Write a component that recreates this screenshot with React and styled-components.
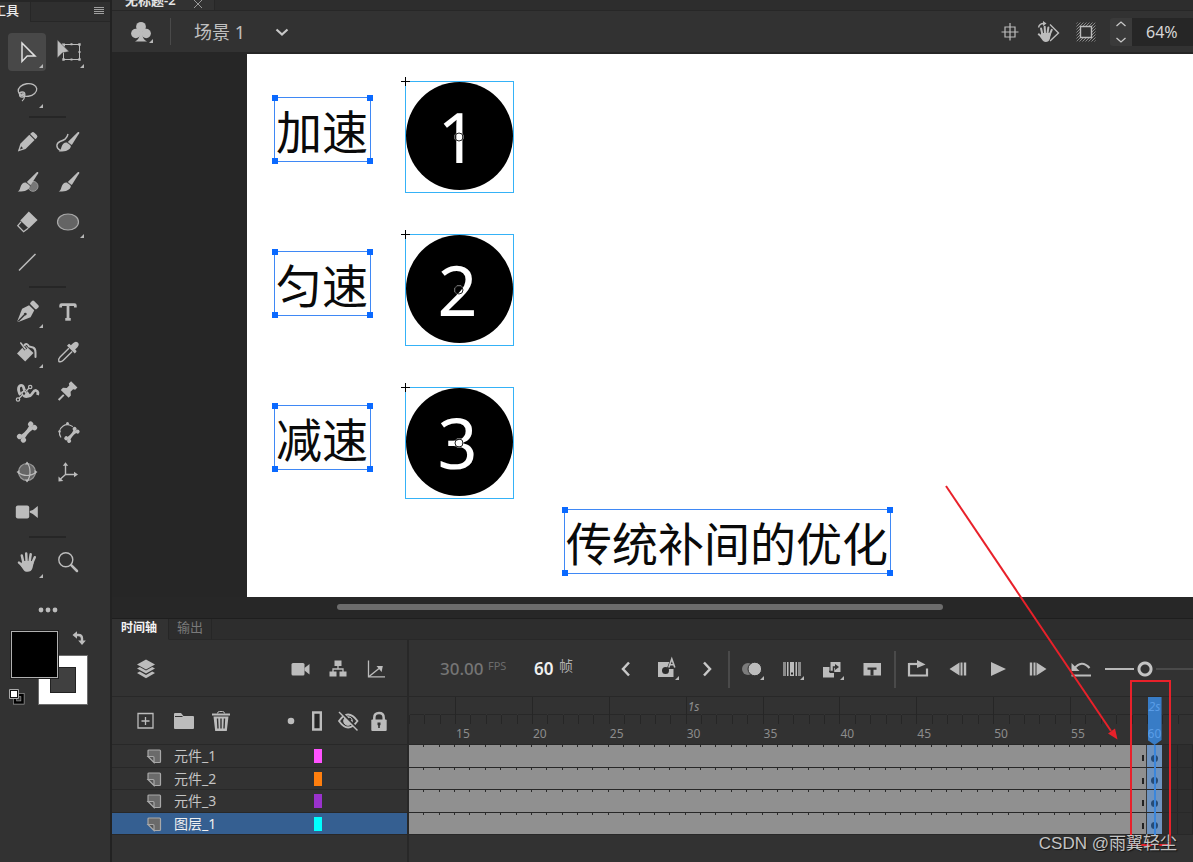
import React, { useState } from "react";
import styled, { createGlobalStyle, css } from "styled-components";
import { Type } from "lucide-react";

const GlobalStyle = createGlobalStyle`
  * {
    box-sizing: border-box;
  }
  body {
    margin: 0;
    background: #262626;
    color: #c4c4c4;
    font-family: "Noto Sans", "Noto Sans CJK SC", sans-serif;
    font-size: 12px;
  }
  button, input {
    font: inherit;
    color: inherit;
    border: 0;
    padding: 0;
    margin: 0;
    background: none;
  }
  button {
    display: flex;
    align-items: center;
    justify-content: center;
  }
`;

const FRAME_COUNT = 51;
const FIRST_FRAME = 12;
const LAST_FRAME = 60;

/* ---------- shell ---------- */

const Shell = styled.div`
  position: relative;
  display: flex;
  height: 100vh;
  overflow: hidden;
`;

const ToolPanel = styled.aside`
  flex: none;
  width: 112px;
  background: #323232;
  border-right: 2px solid #222;
`;

const MainColumn = styled.main`
  flex: 1;
  min-width: 0;
  display: flex;
  flex-direction: column;
`;

const ToolTabs = styled.div`
  display: flex;
  height: 22px;
  background: #2f2f2f;
  border-top: 2px solid #262626;
  margin-bottom: 11px;
`;

const ToolTab = styled.div`
  display: flex;
  justify-content: flex-end;
  width: 30px;
  padding-right: 11px;
  overflow: hidden;
  white-space: nowrap;
  font-size: 13px;
  line-height: 16px;
  font-weight: 500;
  color: #ececec;
  background: #323232;
`;

const ToolTabsRest = styled.div`
  flex: 1;
  display: flex;
  align-items: center;
  justify-content: flex-end;
  padding-right: 6px;
  padding-bottom: 2px;
  border-left: 1px solid #272727;
  border-bottom: 1px solid #272727;
`;

/* ---------- tools ---------- */

const ToolGroup = styled.div`
  display: grid;
  grid-template-columns: 38px 38px;
  grid-auto-rows: 38px;
  gap: 2px 3px;
  padding: 0 8px 2px;
`;

const ToolButton = styled.button`
  position: relative;
  border-radius: 4px;
  background: ${(p) => (p.$active ? "#484848" : "none")};
  ${(p) =>
    p.$more &&
    css`
      &::after {
        content: "";
        position: absolute;
        right: 3px;
        bottom: 3px;
        border: 2px solid #b8b8b8;
        border-top-color: transparent;
        border-left-color: transparent;
      }
    `}
`;

const ToolSeparator = styled.hr`
  width: 37px;
  height: 2px;
  margin: 3px 0 5px 29px;
  border: 0;
  background: #262626;
`;

const MoreTools = styled.button`
  width: 80px;
  height: 38px;
  margin: 8px 0 1px 8px;
`;

const Swatches = styled.div`
  position: relative;
  height: 78px;
  margin-left: 10px;
`;

const FillSwatch = styled.button`
  position: absolute;
  left: 0;
  top: 0;
  width: 49px;
  height: 49px;
  border: 1px solid #1c1c1c;
  background: #000;
  box-shadow: inset 0 0 0 1px #b0b0b0;
`;

const StrokeSwatch = styled.button`
  position: absolute;
  left: 28px;
  top: 25px;
  width: 50px;
  height: 50px;
  border: 1px solid #6c6c6c;
  background: #fff;
  span {
    width: 26px;
    height: 26px;
    background: #404040;
    border: 1px solid #222;
  }
`;

const SwapButton = styled.button`
  position: absolute;
  left: 61px;
  top: 0;
`;

const ResetButton = styled.button`
  position: absolute;
  left: -2px;
  top: 58px;
`;

/* ---------- document header ---------- */

const DocTabs = styled.div`
  flex: none;
  display: flex;
  height: 11px;
  overflow: hidden;
  background: #2d2d2d;
  border-bottom: 1px solid #272727;
`;

const DocTab = styled.div`
  display: flex;
  align-items: flex-end;
  gap: 18px;
  width: 103px;
  padding: 0 0 2px 13px;
  white-space: nowrap;
  font-size: 13px;
  line-height: 16px;
  font-weight: 600;
  color: #e4e4e4;
  background: #323232;
  border-right: 1px solid #272727;
`;

const DocBar = styled.div`
  flex: none;
  display: flex;
  align-items: center;
  height: 43px;
  padding-left: 2px;
  background: #323232;
  border-bottom: 2px solid #262626;
`;

const BarButton = styled.button`
  flex: none;
  width: ${(p) => p.$w || 38}px;
  height: 38px;
  position: relative;
  ${(p) =>
    p.$more &&
    css`
      &::after {
        content: "";
        position: absolute;
        right: ${(p.$w - 24) / 2}px;
        bottom: 8px;
        border: 2px solid #b8b8b8;
        border-top-color: transparent;
        border-left-color: transparent;
      }
    `}
`;

const BarDivider = styled.span`
  flex: none;
  width: ${(p) => p.$w || 1}px;
  height: ${(p) => p.$h}px;
  margin: 0 2px;
  background: #4a4a4a;
`;

const SceneName = styled.span`
  margin: 0 20px 0 21px;
  font-size: 18px;
  line-height: 24px;
  color: #c0c0c0;
`;

const Grow = styled.span`
  flex: 1;
`;

const Spinner = styled.div`
  display: flex;
  flex-direction: column;
  width: 22px;
  height: 28px;
  margin-left: 5px;
  border-radius: 3px 0 0 3px;
  background: #3a3a3a;
  button {
    flex: 1;
  }
`;

const ZoomInput = styled.input`
  width: 61px;
  height: 28px;
  padding-left: 14px;
  font-size: 16px;
  color: #d6d6d6;
  background: #262626;
`;

/* ---------- stage ---------- */

const Workspace = styled.section`
  flex: 1;
  min-height: 0;
  display: flex;
  padding-left: 135px;
  background: #262626;
`;

const Stage = styled.div`
  position: relative;
  flex: 1;
  overflow: hidden;
  background: #fff;
`;

const TextFrame = styled.div`
  position: absolute;
  left: ${(p) => p.$x}px;
  top: ${(p) => p.$y}px;
  padding: 0 2px 0 1px;
  border: 1px solid #3f88f5;
  font-family: "Noto Sans CJK SC", sans-serif;
  font-size: 46px;
  line-height: 63px;
  white-space: nowrap;
  color: #0a0a0a;
`;

const Handle = styled.i`
  position: absolute;
  width: 6px;
  height: 6px;
  background: #0a69ff;
  ${(p) => p.$v}: -3px;
  ${(p) => p.$h}: -3px;
`;

const SymbolFrame = styled.div`
  position: absolute;
  left: ${(p) => p.$x}px;
  top: ${(p) => p.$y}px;
  width: 109px;
  height: 112px;
  border: 1px solid #35b2f7;
`;

const SymbolDisc = styled.div`
  display: flex;
  align-items: center;
  justify-content: center;
  height: 108px;
  padding-right: 4px;
  border-radius: 50%;
  background: #000;
  color: #fff;
  font-family: "Noto Sans", sans-serif;
  font-size: 70px;
  line-height: 108px;
`;

const RegistrationCross = styled.svg`
  position: absolute;
  left: -5px;
  top: -5px;
`;

const PivotPoint = styled.svg`
  position: absolute;
  left: 47px;
  top: 49px;
`;

const ScrollStrip = styled.div`
  flex: none;
  height: 21px;
  padding: 7px 0 0 20.8%;
  background: #272727;
`;

const ScrollThumb = styled.div`
  width: 70.8%;
  height: 6px;
  border-radius: 3px;
  background: #6c6c6c;
`;

/* ---------- timeline ---------- */

const Timeline = styled.section`
  flex: none;
  background: #323232;
  border-top: 1px solid #1e1e1e;
`;

const PanelTabs = styled.div`
  display: flex;
  height: 21px;
  background: #2d2d2d;
`;

const PanelTab = styled.button`
  padding: ${(p) => (p.$active ? "0 11px 3px 9px" : "0 8px 4px 8px")};
  font-size: ${(p) => (p.$active ? 12 : 13)}px;
  line-height: 16px;
  font-weight: ${(p) => (p.$active ? 700 : 400)};
  color: ${(p) => (p.$active ? "#f2f2f2" : "#7a7a7a")};
  background: ${(p) => (p.$active ? "#323232" : "none")};
  border-right: 1px solid #262626;
  border-bottom: 1px solid ${(p) => (p.$active ? "#323232" : "#282828")};
`;

const PanelTabsRest = styled.div`
  flex: 1;
  border-bottom: 1px solid #282828;
`;

const TimelineBody = styled.div`
  display: flex;
`;

const LayersPane = styled.div`
  flex: none;
  width: 297px;
  border-right: 2px solid #282828;
`;

const FramesPane = styled.div`
  flex: 1;
  min-width: 0;
  overflow: hidden;
`;

const Toolbar = styled.div`
  display: flex;
  align-items: center;
  height: 57px;
  padding: ${(p) => p.$pad};
  border-bottom: 1px solid #282828;
`;

const LayerHeader = styled.div`
  display: flex;
  align-items: center;
  height: 48px;
  padding: 0 13px 0 14px;
  border-bottom: 1px solid #282828;
`;

const LayerList = styled.ul`
  display: grid;
  grid-template-rows: repeat(4, minmax(0, 1fr));
  height: 90px;
  margin: 0 0 27px;
  padding: 0;
  list-style: none;
`;

const LayerRow = styled.li`
  display: flex;
  align-items: center;
  padding: 1px 85px 0 34px;
  font-size: 14px;
  line-height: 20px;
  color: ${(p) => (p.$active ? "#f0f0f0" : "#c4c4c4")};
  background: ${(p) => (p.$active ? "#355f91" : "none")};
  border-bottom: 1px solid #282828;
`;

const LayerName = styled.span`
  flex: 1;
  padding-left: 12px;
`;

const LayerColor = styled.span`
  width: 8px;
  height: 14px;
  background: ${(p) => p.$color};
`;

const NumberField = styled.label`
  flex: none;
  display: flex;
  width: ${(p) => p.$w}px;
  line-height: 24px;
  color: ${(p) => (p.$bright ? "#f0f0f0" : "#757575")};
  input {
    width: ${(p) => (p.$bright ? 25 : 48)}px;
    height: 24px;
    font-size: 17px;
    font-weight: ${(p) => (p.$bright ? 600 : 500)};
  }
  span {
    font-size: ${(p) => (p.$bright ? 14 : 11)}px;
    line-height: 18px;
    color: ${(p) => (p.$bright ? "#b0b0b0" : "#6c6c6c")};
  }
`;

const ZoomSlider = styled.input`
  flex: none;
  appearance: none;
  width: 100px;
  height: 22px;
  margin-left: 1px;
  background: linear-gradient(90deg, #b8b8b8 40px, #4a4a4a 40px) center / 100%
    2px no-repeat;
  &::-webkit-slider-thumb {
    appearance: none;
    width: 22px;
    height: 22px;
    background: radial-gradient(
      circle,
      #323232 4px,
      #c4c4c4 5px,
      #c4c4c4 7px,
      #323232 8px
    );
  }
`;

const FrameArea = styled.div`
  position: relative;
`;

const Ruler = styled.div`
  display: grid;
  grid-template-columns: repeat(${FRAME_COUNT}, minmax(0, 1fr));
  height: 48px;
  border-bottom: 1px solid #282828;
`;

const RulerCell = styled.div`
  height: 27px;
  white-space: nowrap;
  border-left: 1px solid ${(p) => (p.$major ? "#262626" : "transparent")};
  background: linear-gradient(#282828, #282828) 0 17px / 100% 1px no-repeat,
    linear-gradient(#262626, #262626) -1px 18px / 1px 9px no-repeat;
  background-origin: padding-box;
  background-clip: border-box;
  color: #8c8c8c;
`;

const SecondLabel = styled.div`
  height: 27px;
  padding-left: 1px;
  font-size: 12px;
  line-height: 19px;
  font-style: italic;
`;

const FrameLabel = styled.div`
  font-size: 12px;
  line-height: 20px;
`;

const FrameRows = styled.div`
  display: grid;
  grid-template-rows: repeat(4, minmax(0, 1fr));
  height: 90px;
  margin-bottom: 27px;
`;

const FrameRow = styled.div`
  display: grid;
  grid-template-columns: repeat(${FRAME_COUNT}, minmax(0, 1fr));
  border-bottom: 1px solid #282828;
`;

const FrameCell = styled.div`
  display: flex;
  align-items: center;
  justify-content: ${(p) => (p.$kind === "key" ? "center" : "flex-end")};
  padding-top: 5px;
  background: linear-gradient(#2a2a2a, #2a2a2a) right top / 1px 2px no-repeat
    #909090;
  ${(p) =>
    p.$kind === "end" &&
    css`
      padding-right: 2px;
      background: #909090;
      border-right: 1px solid #3a3a3a;
    `}
  ${(p) =>
    p.$kind === "key" &&
    css`
      background: #6e93bf;
    `}
  ${(p) =>
    p.$kind === "empty" &&
    css`
      background: #2e2e2e;
      border-right: 1px solid #262626;
    `}
`;

const EndMark = styled.span`
  width: 2px;
  height: 6px;
  background: #222;
`;

const KeyDot = styled.span`
  width: 7px;
  height: 7px;
  border-radius: 50%;
  background: #274b75;
`;

const PlayheadLayer = styled.div`
  position: absolute;
  inset: 0;
  display: grid;
  grid-template-columns: repeat(${FRAME_COUNT}, minmax(0, 1fr));
  pointer-events: none;
`;

const Playhead = styled.div`
  grid-column: ${LAST_FRAME - FIRST_FRAME + 1};
  display: flex;
  flex-direction: column;
  align-items: center;
`;

const PlayheadFlag = styled.div`
  width: 14px;
  height: 48px;
  overflow: hidden;
  font-size: 12px;
  color: #5a9ce6;
  background: #387cc6;
  clip-path: polygon(0 0, 100% 0, 100% 43px, 50% 100%, 0 43px);
`;

const PlayheadLine = styled.div`
  flex: 1;
  width: 2px;
  background: #3a86dc;
`;

/* ---------- annotations ---------- */

const Annotation = styled.svg`
  position: absolute;
  right: 0;
  bottom: 0;
  pointer-events: none;
`;

const Watermark = styled.div`
  position: absolute;
  right: 16px;
  bottom: 6px;
  font-family: "Liberation Sans", "Noto Sans CJK SC", sans-serif;
  font-size: 17px;
  line-height: 24px;
  color: #c4c4c4;
  text-shadow: 1px 1px 1px #111;
`;

/* ---------- icons ---------- */

const C = "#bcbcbc";
const BG = "#323232";

const Icon = ({ size = 24, fill = C, stroke = "none", children }) => (
  <svg
    width={size}
    height={size}
    viewBox={`0 0 ${size} ${size}`}
    fill={fill}
    stroke={stroke}
    overflow="visible"
    aria-hidden="true"
  >
    {children}
  </svg>
);

const Brush = () => (
  <>
    <path d="M21.700 2.200c.8-.7 2 0 1.500 1L15.800 15l-4-3z" />
    <path d="M11 12.600c2.200.3 3.700 1.700 3.900 3.600-.8 4-5.200 5.500-12.200 5.300 1.900-1 2.100-2.500 2.800-4.500.8-2.500 2.700-4.800 5.500-4.400z" />
    <path d="m10.800 12.200 5 3.800" stroke={BG} strokeWidth=".7" />
  </>
);

const BoneShape = () => (
  <>
    <path d="M9 4h6l-1 6v4l1 6H9l1-6v-4z" />
    <circle cx="9.200" cy="3" r="2.900" />
    <circle cx="14.800" cy="3" r="2.900" />
    <circle cx="9.200" cy="21" r="2.900" />
    <circle cx="14.800" cy="21" r="2.900" />
  </>
);

const HandShape = () => (
  <>
    <g stroke={C} strokeWidth="2.500" strokeLinecap="round" fill="none">
      <path d="M8.500 13 6.800 5.500M11.600 12 11.200 3.500M14.500 12 15.700 4.200M17 13.500 19.800 7.200M8.500 16.500 4 12.600" />
    </g>
    <path d="M7.300 11h9.500l2 1.500-1.300 5.500c-.8 2.800-2.500 3.800-5 3.800-2.300 0-3.500-.8-4.600-2.800L5.500 15.500z" />
  </>
);

const SelectIcon = () => (
  <Icon fill="none" stroke="#e0e0e0">
    <path d="M7 3v18.500l5.200-5.400h7.800z" strokeWidth="1.500" />
  </Icon>
);

const TransformIcon = () => (
  <Icon>
    <g transform="translate(0 -1)">
      <path d="M7.500 5.500h16v15h-16z" fill="none" stroke={C} />
      <path d="M6 4.500h3v3H6zM14.500 4.300h2v2h-2zM22.300 4.300h2.400v2.400h-2.400zM22.500 12h2v2h-2zM22.300 19.300h2.400v2.400h-2.400zM14.500 19.500h2v2h-2zM6.300 19.300h2.400v2.400H6.300z" />
      <path d="M1.300.8v18.200l5.200-5.200 6.600-1.200z" stroke={BG} strokeWidth=".5" />
    </g>
  </Icon>
);

const LassoIcon = () => (
  <Icon fill="none" stroke={C}>
    <ellipse cx="12.500" cy="10" rx="9.300" ry="6.300" strokeWidth="1.300" transform="rotate(-8 12.500 10)" />
    <circle cx="7.200" cy="14.500" r="2.700" strokeWidth="1.200" />
    <path d="M4 13.200c2-1.500 5.500 0 5.500 3.300 0 2-1 3.500-2.500 4.500M5 15.500l4-1.500" strokeWidth="1.200" />
  </Icon>
);

const PencilIcon = () => (
  <Icon>
    <g transform="translate(-.3 .7) rotate(45 12 12)">
      <path d="M8.300 1.500q0-2 2-2h3.400q2 0 2 2v2H8.300z" />
      <path d="M8.300 4.600h7.400v12.700L12 24.500l-3.700-7.200z" />
      <path d="M10.600 18.500h2.800L12 21.500z" fill={BG} />
    </g>
  </Icon>
);

const ArtBrushIcon = () => (
  <Icon>
    <Brush />
    <path
      d="M4.500 20.500C-.5 18 0 13.500 4 11.500c4-1.400 7-2.500 8-7.500"
      fill="none"
      stroke={C}
      strokeWidth="1.400"
    />
  </Icon>
);

const PaintBrushIcon = () => (
  <Icon>
    <circle cx="18" cy="16.300" r="5" fill="#777" stroke="#999" />
    <Brush />
  </Icon>
);

const BrushIcon = () => (
  <Icon>
    <Brush />
  </Icon>
);

const EraserIcon = () => (
  <Icon>
    <path d="M13.800 1.500 22.600 10 13.800 18.600 5.300 10.400z" />
    <path
      d="m6 11.800-3.200 3.900 5.800 6 4.600-3.500"
      fill="none"
      stroke={C}
      strokeWidth="1.300"
    />
  </Icon>
);

const OvalIcon = () => (
  <Icon>
    <ellipse cx="12" cy="12" rx="10.500" ry="8" fill="#646464" stroke="#aaa" strokeWidth="1.200" />
  </Icon>
);

const LineIcon = () => (
  <Icon stroke={C}>
    <path d="M4 20.500 20.500 4" strokeWidth="1.500" />
  </Icon>
);

const PenIcon = () => (
  <Icon>
    <g transform="translate(-.3 .7) rotate(45 12 12)">
      <rect x="7.500" y="-1.500" width="9" height="5" rx="1.500" />
      <path d="M8.300 5h7.400l2.300 7.500L12.700 24.500h-1.400L6 12.500z" />
      <path d="M12 24v-9" stroke={BG} strokeWidth="1.500" />
      <circle cx="12" cy="14" r="1.400" fill={BG} />
    </g>
  </Icon>
);

const BucketIcon = () => (
  <Icon>
    <path d="M10 5 18.500 13l-8.300 8.500L2 13.500z" />
    <path d="m5.800 3 5 6.500" stroke={BG} strokeWidth="3.500" />
    <path d="m5.800 3 4.500 6" stroke={C} strokeWidth="1.600" strokeLinecap="round" />
    <path d="M9.500 5q2.500-2.500 4.500 1.500l4 1q2.500 1 2.500 5v4.500" fill="none" stroke={C} strokeWidth="2" strokeLinecap="round" />
  </Icon>
);

const EyedropperIcon = () => (
  <Icon>
    <g transform="translate(-.3 .7) rotate(45 12 12)">
      <path d="M9 1.500Q9-2.300 12-2.300t3 3.800V4.500h1.500q1 0 1 1V7.500h-11v-2q0-1 1-1H9z" />
      <path d="M9.700 8v12.500q0 3 2.300 4 2.300-1 2.300-4V8" fill="none" stroke={C} strokeWidth="1.400" />
    </g>
  </Icon>
);

const WarpIcon = () => (
  <Icon>
    <path
      d="M5.500 15C2 9.500 3.500 4.500 7 5.500c3.200 1 .5 5.500 5 9.500 5 3.500 5.500-5.500 9-4.500 2.500.8 2 3 1.500 4.500"
      fill="none"
      stroke={C}
      strokeWidth="2.800"
    />
    <path d="m6 12 5-3 5 7q-5 4-9 0z" />
    <path d="M3 19.500 15 7" stroke={BG} strokeWidth="2.400" />
    <path d="M3 19.500 15 7" stroke={C} strokeWidth="1.300" />
    <g fill={BG} stroke={C} strokeWidth="1.200">
      <circle cx="3" cy="19.500" r="1.700" />
      <circle cx="9" cy="13.500" r="1.900" />
      <circle cx="15.200" cy="7" r="1.700" />
    </g>
  </Icon>
);

const PinIcon = () => (
  <Icon>
    <g transform="translate(-.500 1.500) scale(.9) rotate(45 12 12)">
      <path d="M7-.5h10V3l-2 1.300v4l3.200 2.700v3.500H5.800V11L9 8.300v-4L7 3z" />
      <path d="M12 16v8" stroke={C} strokeWidth="2.200" />
    </g>
  </Icon>
);

const BoneIcon = () => (
  <Icon>
    <g transform="translate(1 1) scale(.92) rotate(42 12 12)">
      <BoneShape />
    </g>
  </Icon>
);

const BindIcon = () => (
  <Icon>
    <path d="M5 17.500A8 8 0 1 1 18.500 9" fill="none" stroke={C} strokeWidth="1.200" />
    <circle cx="11.500" cy="3.500" r="1.500" />
    <circle cx="3.500" cy="11.500" r="1.200" />
    <g transform="translate(7.500 6.500) scale(.7) rotate(42 12 12)">
      <g stroke={BG} strokeWidth="2.500">
        <BoneShape />
      </g>
      <BoneShape />
    </g>
  </Icon>
);

const SphereIcon = () => (
  <Icon fill="none" stroke={C}>
    <circle cx="12" cy="12" r="8.500" fill="#666" stroke="#999" strokeWidth="1.200" />
    <path d="M3 12.500c5 4 13 4 18 0M12 2.500c4 5 4 14 0 19" strokeWidth="1.200" />
    <g fill={C} stroke="none">
      <path d="M10 4.500 12 1.500l2 3zM10 19.500l2 3 2-3zM4.500 10 1.500 12l3 2zM19.500 10l3 2-3 2z" />
    </g>
  </Icon>
);

const AxesIcon = () => (
  <Icon fill="none" stroke={C}>
    <path d="M9.500 5v9.500H19M9.500 14.500 4.500 19" strokeWidth="1.400" />
    <g fill={C} stroke="none">
      <path d="M6.800 5.800 9.500 2.200l2.700 3.600zM18 11.800l4 2.700-4 2.700zM2.500 21.500v-5l4.800 4.600z" />
    </g>
  </Icon>
);

const CameraIcon = () => (
  <Icon>
    <rect x=".8" y="5.500" width="13.400" height="13" rx="2" />
    <path d="M14.800 12.500v-1.500l3-1 5-4v12l-5-4z" />
  </Icon>
);

const SmallCameraIcon = () => (
  <Icon>
    <rect x="3.500" y="6" width="13" height="12.500" rx="1.500" />
    <path d="M16.500 11 21.500 7v10.500l-5-4z" />
  </Icon>
);

const HandIcon = () => (
  <Icon>
    <HandShape />
  </Icon>
);

const MagnifierIcon = () => (
  <Icon fill="none" stroke={C}>
    <circle cx="9.800" cy="9.800" r="7" strokeWidth="1.400" />
    <path d="M15.200 15.200 21 21" strokeWidth="2.500" strokeLinecap="round" />
  </Icon>
);

const DotsIcon = () => (
  <Icon>
    <circle cx="5" cy="12" r="2.400" />
    <circle cx="12" cy="12" r="2.400" />
    <circle cx="19" cy="12" r="2.400" />
  </Icon>
);

const SwapIcon = () => (
  <Icon size={16}>
    <path d="M4 5h3.500Q11 5 11 8.500V12" fill="none" stroke={C} strokeWidth="2.400" />
    <path d="M1.500 5 6 1.200v7.600zM7.200 10.500h7.600L11 15z" />
  </Icon>
);

const DefaultColorsIcon = () => (
  <Icon size={18}>
    <path d="M7 7h7.500v7.500H7z" fill="none" stroke="#999" strokeWidth="4" />
    <path d="M7 7h7.500v7.500H7z" fill="none" stroke="#000" strokeWidth="2.600" />
    <path d="M1.500 1.500h9v9h-9z" fill="#111" stroke="#aaa" />
    <path d="M3 3h6v6H3z" fill="#fff" />
  </Icon>
);

const ClubIcon = () => (
  <Icon>
    <circle cx="12" cy="6.800" r="4.900" />
    <circle cx="6.800" cy="13.500" r="4.700" />
    <circle cx="17.200" cy="13.500" r="4.700" />
    <path d="M10.500 10h3v5c.3 3 1.500 4.800 4.500 6.500H6c3-1.700 4.200-3.500 4.500-6.500z" />
  </Icon>
);

const Chevron = ({ d, w = 2.2, size = 16 }) => (
  <Icon size={size} fill="none" stroke="#c8c8c8">
    <path d={d} strokeWidth={w} />
  </Icon>
);

const CenterIcon = () => (
  <Icon fill="none" stroke={C}>
    <path d="M7 7h10v10H7zM12 3v17.500M3.500 12h17" strokeWidth="1.200" />
  </Icon>
);

const RotateStageIcon = () => (
  <Icon>
    <path d="m14 4.500 8.500 8.500-8.500 8" fill="none" stroke={C} strokeWidth="1.400" />
    <g transform="translate(-.500 4) scale(.82)">
      <g stroke={BG} strokeWidth="1.500">
        <path d="M7.300 11h9.500l2 1.500-1.300 5.500c-.8 2.800-2.500 3.800-5 3.800z" />
      </g>
      <HandShape />
    </g>
    <path d="M2.500 7.500q1-4 5-4" fill="none" stroke={C} strokeWidth="1.400" />
    <path d="m7 1 3.500 2.500L7 6z" />
  </Icon>
);

const ClipIcon = () => (
  <Icon>
    <defs>
      <pattern id="hatch" width="3" height="3" patternUnits="userSpaceOnUse">
        <path d="M-1 1 1-1M0 3 3 0M2 4 4 2" stroke="#a0a0a0" strokeWidth=".8" />
      </pattern>
    </defs>
    <path d="M2.500 2.500h19v19h-19z" fill="url(#hatch)" />
    <path d="M6.500 6.500h11v11h-11z" fill={BG} stroke={C} strokeWidth="1.400" />
  </Icon>
);

const LayersIcon = () => (
  <Icon>
    <path d="m12 2.500 9 5-9 5-9-5z" />
    <path d="m3 11.500 2.800-1.500L12 13.500l6.200-3.500 2.800 1.500-9 5zM3 16l2.800-1.500L12 18l6.200-3.500L21 16l-9 5.200z" />
  </Icon>
);

const HierarchyIcon = () => (
  <Icon>
    <path d="M8.500 3.500h7V9h-7zM3.500 14.500h7v5h-7zM13.500 14.500h7v5h-7z" />
    <path d="M12 9v3M7 15v-3h10v3" fill="none" stroke={C} strokeWidth="1.300" />
  </Icon>
);

const GraphIcon = () => (
  <Icon fill="none" stroke={C}>
    <path d="M4.500 3.500v16.300h16.500" strokeWidth="1.300" />
    <path d="m5 19.500 10-8" strokeWidth="1.400" />
    <path d="M12.500 9h6.300l-1.200 6z" fill={C} stroke="none" />
  </Icon>
);

const AddIcon = () => (
  <Icon fill="none" stroke={C}>
    <path d="M5 4.500h15v14.500H5z" strokeWidth="1.300" />
    <path d="M12.500 8v8M8.500 12h8" strokeWidth="1.300" />
  </Icon>
);

const FolderIcon = () => (
  <Icon>
    <path d="M3.500 4h6.500l2.500 3h9.500q1 0 1 1v11q0 1-1 1H4q-1 0-1-1V5z" />
    <path d="M4 7.500h7.500" stroke={BG} />
  </Icon>
);

const TrashIcon = () => (
  <Icon>
    <path d="M3 4.500h18v2H3zM4.500 7.500h15L17.800 22H6.200z" />
    <path d="M8.500 4.500q0-2 2-2h3q2 0 2 2" fill="none" stroke={C} />
    <path d="m8.500 9.500.5 10M12 9.500v10M15.500 9.500 15 19.500" stroke={BG} strokeWidth="1.400" />
  </Icon>
);

const DotIcon = () => (
  <Icon size={8}>
    <circle cx="4" cy="4" r="3.300" />
  </Icon>
);

const OutlineIcon = () => (
  <Icon size={20}>
    <path d="M6.200 1.500h7.600v17H6.200z" fill="#262626" stroke={C} strokeWidth="2.400" />
  </Icon>
);

const HiddenIcon = () => (
  <Icon fill="none" stroke={C}>
    <path d="M3 12q9-13 18.500 0-9.500 13-18.500 0z" strokeWidth="1.800" />
    <circle cx="12" cy="12" r="4.300" fill={C} />
    <circle cx="13.700" cy="10.300" r="1.600" fill={BG} stroke="none" />
    <path d="m4.500 2.500 18 18.500" stroke={BG} strokeWidth="2.500" />
    <path d="m3 3 18.500 18.500" strokeWidth="1.500" />
  </Icon>
);

const LockIcon = () => (
  <Icon>
    <rect x="4.300" y="10.500" width="15.400" height="11.500" rx="1" />
    <path d="M7.300 11V8.700q0-4.700 4.700-4.700t4.700 4.700V11" fill="none" stroke={C} strokeWidth="2.500" />
    <path d="M10.500 13.500h3v2.500l-.7.600V19h-1.600v-2.400l-.7-.6z" fill={BG} />
  </Icon>
);

const LayerIcon = () => (
  <Icon size={16}>
    <path d="M2 2h12.500v12.500H8L2 8.500z" fill="#6a6a6a" />
    <path d="M2 9V3q0-1 1-1h10.500q1 0 1 1v10.500q0 1-1 1H8" fill="none" stroke="#a8a8a8" strokeWidth="1.200" />
    <path d="M2 8.500 8 14.500V9.500q0-1-1-1z" fill="#555" stroke="#a8a8a8" strokeWidth="1.200" />
  </Icon>
);

const AutoKeyIcon = () => (
  <Icon>
    <path d="M3 5h15.500v15H3z" />
    <circle cx="10.500" cy="13.500" r="3.500" fill="#2a2a2a" />
    <path d="M13 11 16.800 1.500l4 9.500z" fill={BG} stroke={BG} strokeWidth="2" />
    <path d="m13.800 10.500 3-8.500 3 8.500M14.800 7.800h4" fill="none" stroke={C} strokeWidth="1.600" />
  </Icon>
);

const OnionIcon = () => (
  <Icon>
    <circle cx="8" cy="12" r="6" fill="#7c7c7c" />
    <circle cx="14.800" cy="12" r="6.800" stroke={BG} />
  </Icon>
);

const EditFramesIcon = () => (
  <Icon>
    <path d="M3 5h3v14H3zM18 5h3v14h-3z" fill="#8a8a8a" />
    <path d="M7 5h1.500v14H7zM15.500 5H17v14h-1.500zM10 5h4v14h-4z" />
    <path d="M11 15.500h2v2h-2z" fill="#222" />
  </Icon>
);

const InsertKeyIcon = () => (
  <Icon>
    <path d="M3 10h11v10.500H3z" />
    <path d="M10 4.500h11v11H10z" stroke={BG} />
    <path d="M9 14.500h4.500V10H16" fill="none" stroke={BG} strokeWidth="1.500" />
    <path d="m15 7 4 3-4 3z" fill={BG} />
  </Icon>
);

const InsertFrameIcon = () => (
  <Icon>
    <path d="M3.500 6h17.500v12.500H3.500z" />
    <path d="M7.500 10.500h9v2.300h-3v5.700h-3v-5.700h-3z" fill={BG} />
  </Icon>
);

const LoopIcon = () => (
  <Icon fill="none" stroke={C}>
    <path d="M9 7H3v11.500h18V11.500" strokeWidth="2.200" />
    <path d="M3 7h9" strokeWidth="2.200" />
    <path d="m11 3 8.500 4.500L11 11z" fill={C} stroke="none" />
  </Icon>
);

const StepBackIcon = () => (
  <Icon>
    <path d="M3.500 12 13.500 5.500v13zM14.500 5.500h2v13h-2zM17.800 5.500h2.400v13h-2.400z" />
  </Icon>
);

const PlayIcon = () => (
  <Icon>
    <path d="m5 5 15 7-15 7z" />
  </Icon>
);

const StepForwardIcon = () => (
  <Icon>
    <path d="M20.500 12 10.500 5.500v13zM7.500 5.500h2v13h-2zM3.800 5.500h2.400v13H3.800z" />
  </Icon>
);

const FitIcon = () => (
  <Icon fill="none" stroke={C}>
    <path d="M5 12q7.500-10 15.500-1" strokeWidth="2.200" />
    <path d="M2.500 6v8h8z" fill={C} stroke="none" />
    <path d="M2.500 18.500h19.500" strokeWidth="2" />
  </Icon>
);

/* ---------- data ---------- */

const toolGroups = [
  [
    { name: "选择", icon: <SelectIcon />, more: true },
    { name: "任意变形", icon: <TransformIcon />, more: true },
    { name: "套索", icon: <LassoIcon />, more: true },
  ],
  [
    { name: "铅笔", icon: <PencilIcon /> },
    { name: "艺术画笔", icon: <ArtBrushIcon /> },
    { name: "画笔", icon: <PaintBrushIcon /> },
    { name: "传统画笔", icon: <BrushIcon /> },
    { name: "橡皮擦", icon: <EraserIcon /> },
    { name: "椭圆", icon: <OvalIcon />, more: true },
    { name: "线条", icon: <LineIcon /> },
  ],
  [
    { name: "钢笔", icon: <PenIcon />, more: true },
    { name: "文本", icon: <Type size={22} color={C} strokeWidth={3} strokeLinecap="butt" /> },
    { name: "颜料桶", icon: <BucketIcon />, more: true },
    { name: "滴管", icon: <EyedropperIcon /> },
    { name: "资源变形", icon: <WarpIcon /> },
    { name: "图钉", icon: <PinIcon /> },
    { name: "骨骼", icon: <BoneIcon /> },
    { name: "绑定", icon: <BindIcon /> },
    { name: "3D 旋转", icon: <SphereIcon /> },
    { name: "3D 平移", icon: <AxesIcon /> },
    { name: "摄像头", icon: <CameraIcon /> },
  ],
  [
    { name: "手形", icon: <HandIcon />, more: true },
    { name: "缩放", icon: <MagnifierIcon /> },
  ],
];

const texts = [
  { text: "加速", x: 27, y: 43 },
  { text: "匀速", x: 27, y: 197 },
  { text: "减速", x: 27, y: 351 },
  { text: "传统补间的优化", x: 317, y: 455 },
];

const symbols = [
  { label: "1", x: 158, y: 27 },
  { label: "2", x: 158, y: 180 },
  { label: "3", x: 158, y: 333 },
];

const layers = [
  { name: "元件_1", color: "#ff52ff" },
  { name: "元件_2", color: "#ff7f0e" },
  { name: "元件_3", color: "#9a32cd" },
  { name: "图层_1", color: "#00ffff" },
];

const frames = Array.from({ length: FRAME_COUNT }, (_, i) => FIRST_FRAME + i);

const frameKind = (frame) => {
  if (frame > LAST_FRAME) return "empty";
  if (frame === LAST_FRAME) return "key";
  if (frame === LAST_FRAME - 1) return "end";
  return "span";
};

/* ---------- parts ---------- */

const Tools = () => {
  const [tool, setTool] = useState("选择");
  return (
    <ToolPanel>
      <ToolTabs>
        <ToolTab>工具</ToolTab>
        <ToolTabsRest>
          <Icon size={10} stroke="#a0a0a0">
            <path d="M0 1.500h10M0 3.500h10M0 5.500h10M0 7.500h10" />
          </Icon>
        </ToolTabsRest>
      </ToolTabs>
      {toolGroups.map((group, index) => (
        <React.Fragment key={index}>
          {index > 0 && <ToolSeparator />}
          <ToolGroup>
            {group.map((item) => (
              <ToolButton
                key={item.name}
                aria-label={item.name}
                $active={tool === item.name}
                $more={item.more}
                onClick={() => setTool(item.name)}
              >
                {item.icon}
              </ToolButton>
            ))}
          </ToolGroup>
        </React.Fragment>
      ))}
      <MoreTools aria-label="更多工具">
        <DotsIcon />
      </MoreTools>
      <Swatches>
        <StrokeSwatch aria-label="笔触颜色">
          <span />
        </StrokeSwatch>
        <FillSwatch aria-label="填充颜色" />
        <SwapButton aria-label="交换颜色">
          <SwapIcon />
        </SwapButton>
        <ResetButton aria-label="黑白">
          <DefaultColorsIcon />
        </ResetButton>
      </Swatches>
    </ToolPanel>
  );
};

const DocumentBar = () => {
  const [zoom, setZoom] = useState("64%");
  return (
    <>
      <DocTabs>
        <DocTab>
          无标题-2
          <Icon size={8} stroke="#999" fill="none">
            <path d="m0 0 8 8M8 0 0 8" />
          </Icon>
        </DocTab>
      </DocTabs>
      <DocBar>
        <BarButton aria-label="编辑元件" $w={54} $more>
          <ClubIcon />
        </BarButton>
        <BarDivider $h={27} />
        <SceneName>场景 1</SceneName>
        <BarButton aria-label="场景列表" $w={34}>
          <Chevron d="m2.500 5.500 5.500 5 5.500-5" />
        </BarButton>
        <Grow />
        <BarButton aria-label="舞台居中">
          <CenterIcon />
        </BarButton>
        <BarButton aria-label="旋转舞台">
          <RotateStageIcon />
        </BarButton>
        <BarButton aria-label="剪切舞台外内容">
          <ClipIcon />
        </BarButton>
        <Spinner>
          <button aria-label="放大">
            <Chevron size={10} w={1.3} d="M.5 6 5 2l4.500 4" />
          </button>
          <button aria-label="缩小">
            <Chevron size={10} w={1.3} d="M.5 4 5 8l4.500-4" />
          </button>
        </Spinner>
        <ZoomInput
          aria-label="缩放比例"
          value={zoom}
          onChange={(e) => setZoom(e.target.value)}
        />
      </DocBar>
    </>
  );
};

const StageText = ({ text, x, y }) => (
  <TextFrame $x={x} $y={y}>
    {text}
    <Handle $v="top" $h="left" />
    <Handle $v="top" $h="right" />
    <Handle $v="bottom" $h="left" />
    <Handle $v="bottom" $h="right" />
  </TextFrame>
);

const StageSymbol = ({ label, x, y }) => (
  <SymbolFrame $x={x} $y={y}>
    <SymbolDisc>{label}</SymbolDisc>
    <RegistrationCross width="9" height="9" stroke="#000">
      <path d="M4.500 0v9M0 4.500h9" />
    </RegistrationCross>
    <PivotPoint width="12" height="12" fill="none">
      <circle cx="6" cy="6" r="4.500" stroke="#fff" strokeWidth="1" opacity=".6" />
      <circle cx="6" cy="6" r="4" stroke="#222" />
    </PivotPoint>
  </SymbolFrame>
);

const Layers = () => {
  const [selected, setSelected] = useState("图层_1");
  return (
    <LayersPane>
      <Toolbar $pad="2px 12px 0 15px">
        <BarButton aria-label="图层">
          <LayersIcon />
        </BarButton>
        <Grow />
        <BarButton aria-label="添加摄像头">
          <SmallCameraIcon />
        </BarButton>
        <BarButton aria-label="父级视图">
          <HierarchyIcon />
        </BarButton>
        <BarButton aria-label="图层深度">
          <GraphIcon />
        </BarButton>
      </Toolbar>
      <LayerHeader>
        <BarButton aria-label="新建图层">
          <AddIcon />
        </BarButton>
        <BarButton aria-label="新建文件夹">
          <FolderIcon />
        </BarButton>
        <BarButton aria-label="删除">
          <TrashIcon />
        </BarButton>
        <Grow />
        <BarButton aria-label="突出显示" $w={20}>
          <DotIcon />
        </BarButton>
        <BarButton aria-label="轮廓" $w={31}>
          <OutlineIcon />
        </BarButton>
        <BarButton aria-label="隐藏" $w={31}>
          <HiddenIcon />
        </BarButton>
        <BarButton aria-label="锁定" $w={31}>
          <LockIcon />
        </BarButton>
      </LayerHeader>
      <LayerList>
        {layers.map((layer) => (
          <LayerRow
            key={layer.name}
            $active={layer.name === selected}
            onClick={() => setSelected(layer.name)}
          >
            <LayerIcon />
            <LayerName>{layer.name}</LayerName>
            <LayerColor $color={layer.color} />
          </LayerRow>
        ))}
      </LayerList>
    </LayersPane>
  );
};

const PlaybackBar = () => (
  <Toolbar $pad="2px 0 0 31px">
    <NumberField $w={94}>
      <input aria-label="帧速率" defaultValue="30.00" />
      <span>FPS</span>
    </NumberField>
    <NumberField $w={72} $bright>
      <input aria-label="当前帧" defaultValue="60" />
      <span>帧</span>
    </NumberField>
    <BarButton aria-label="上一关键帧" $w={40}>
      <Chevron d="M11 1.500 5 8l6 6.500" w={2.5} />
    </BarButton>
    <BarButton aria-label="自动关键帧" $w={42} $more>
      <AutoKeyIcon />
    </BarButton>
    <BarButton aria-label="下一关键帧" $w={38}>
      <Chevron d="M5 1.500 11 8l-6 6.500" w={2.5} />
    </BarButton>
    <BarDivider $h={37} $w={2} />
    <BarButton aria-label="绘图纸外观" $w={40} $more>
      <OnionIcon />
    </BarButton>
    <BarButton aria-label="编辑多个帧" $w={40} $more>
      <EditFramesIcon />
    </BarButton>
    <BarButton aria-label="插入关键帧" $w={40} $more>
      <InsertKeyIcon />
    </BarButton>
    <BarButton aria-label="插入帧" $w={40}>
      <InsertFrameIcon />
    </BarButton>
    <BarDivider $h={37} $w={2} />
    <BarButton aria-label="循环" $w={40}>
      <LoopIcon />
    </BarButton>
    <BarButton aria-label="后退一帧" $w={40}>
      <StepBackIcon />
    </BarButton>
    <BarButton aria-label="播放" $w={40}>
      <PlayIcon />
    </BarButton>
    <BarButton aria-label="前进一帧" $w={40}>
      <StepForwardIcon />
    </BarButton>
    <BarButton aria-label="重置缩放" $w={46}>
      <FitIcon />
    </BarButton>
    <ZoomSlider
      type="range"
      aria-label="时间轴缩放"
      min="0"
      max="100"
      defaultValue="37"
    />
  </Toolbar>
);

const Frames = () => (
  <FramesPane>
    <PlaybackBar />
    <FrameArea>
      <Ruler>
        {frames.map((frame) => {
          const major = frame % 5 === 0 && frame < LAST_FRAME;
          return (
            <RulerCell key={frame} $major={major}>
              <SecondLabel>{frame === 30 ? "1s" : ""}</SecondLabel>
              {major && <FrameLabel>{frame}</FrameLabel>}
            </RulerCell>
          );
        })}
      </Ruler>
      <FrameRows>
        {layers.map((layer) => (
          <FrameRow key={layer.name}>
            {frames.map((frame) => (
              <FrameCell key={frame} $kind={frameKind(frame)}>
                {frame === LAST_FRAME - 1 && <EndMark />}
                {frame === LAST_FRAME && <KeyDot />}
              </FrameCell>
            ))}
          </FrameRow>
        ))}
      </FrameRows>
      <PlayheadLayer>
        <Playhead>
          <PlayheadFlag>
            <SecondLabel>2s</SecondLabel>
            <FrameLabel>60</FrameLabel>
          </PlayheadFlag>
          <PlayheadLine />
        </Playhead>
      </PlayheadLayer>
    </FrameArea>
  </FramesPane>
);

const App = () => {
  return (
    <>
      <GlobalStyle />
      <Shell>
        <Tools />
        <MainColumn>
          <DocumentBar />
          <Workspace>
            <Stage>
              {texts.map((item) => (
                <StageText key={item.text} {...item} />
              ))}
              {symbols.map((item) => (
                <StageSymbol key={item.label} {...item} />
              ))}
            </Stage>
          </Workspace>
          <ScrollStrip>
            <ScrollThumb />
          </ScrollStrip>
          <Timeline>
            <PanelTabs>
              <PanelTab $active>时间轴</PanelTab>
              <PanelTab>输出</PanelTab>
              <PanelTabsRest />
            </PanelTabs>
            <TimelineBody>
              <Layers />
              <Frames />
            </TimelineBody>
          </Timeline>
        </MainColumn>
        <Annotation width="260" height="400" fill="none" stroke="#e8212a" strokeWidth="2">
          <path d="M13 24 178 269" />
          <path d="m184.500 277.500-9.500-6 7-5z" fill="#e8212a" stroke="none" />
          <path d="M198 219h39v164h-39z" />
        </Annotation>
        <Watermark>CSDN @雨翼轻尘</Watermark>
      </Shell>
    </>
  );
};

export default App;
